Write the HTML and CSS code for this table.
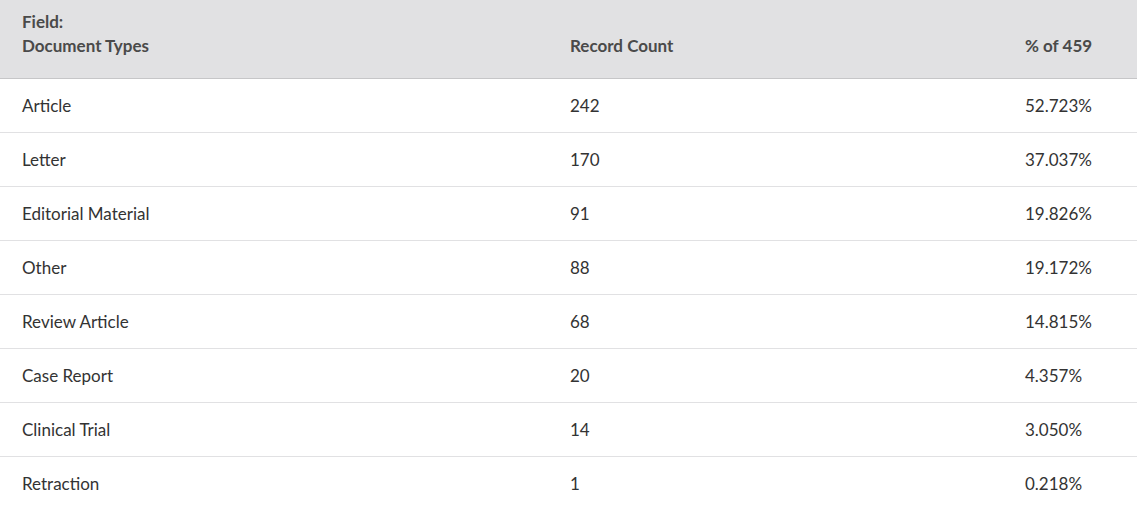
FILE: index.html
```html
<!DOCTYPE html>
<html lang="en">
<head>
<meta charset="utf-8">
<title>Document Types</title>
<link rel="stylesheet" href="styles.css">
</head>
<body>
<table class="results">
  <thead>
    <tr>
      <th class="c-field">Field:<br>Document Types</th>
      <th class="c-count">Record Count</th>
      <th class="c-pct">% of 459</th>
    </tr>
  </thead>
  <tbody>
    <tr><td>Article</td><td>242</td><td>52.723%</td></tr>
    <tr><td>Letter</td><td>170</td><td>37.037%</td></tr>
    <tr><td>Editorial Material</td><td>91</td><td>19.826%</td></tr>
    <tr><td>Other</td><td>88</td><td>19.172%</td></tr>
    <tr><td>Review Article</td><td>68</td><td>14.815%</td></tr>
    <tr><td>Case Report</td><td>20</td><td>4.357%</td></tr>
    <tr><td>Clinical Trial</td><td>14</td><td>3.050%</td></tr>
    <tr><td>Retraction</td><td>1</td><td>0.218%</td></tr>
  </tbody>
</table>
</body>
</html>
```
FILE: styles.css
```css
html, body {
  margin: 0;
  padding: 0;
  background: #ffffff;
}
body {
  font-family: "Lato", "Liberation Sans", sans-serif;
  font-size: 17px;
  color: #333333;
}
.results {
  width: 1137px;
  border-collapse: collapse;
  table-layout: fixed;
}
.results th {
  background: #e1e1e3;
  color: #4a4a4a;
  font-weight: 700;
  text-align: left;
  vertical-align: bottom;
  line-height: 24px;
  padding: 10px 0 20px 22px;
  border-bottom: 1px solid #c6c6c8;
}
.results th.c-field { width: 526px; }
.results th.c-count { width: 433px; }
.results td {
  height: 53px;
  padding: 0 0 0 22px;
  line-height: 24px;
  vertical-align: middle;
  border-bottom: 1px solid #e1e1e3;
}
.results tbody tr:last-child td {
  border-bottom: none;
}
```
